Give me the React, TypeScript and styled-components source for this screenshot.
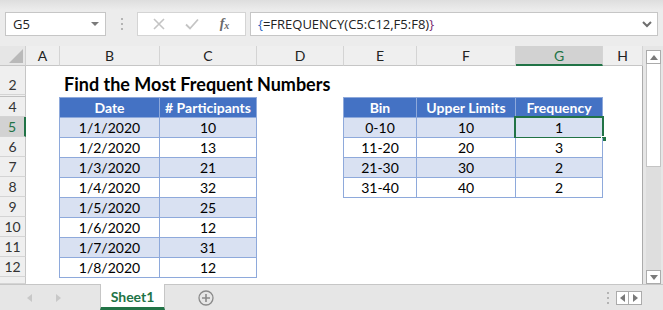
import React from 'react';
import styled, { createGlobalStyle } from 'styled-components';

const GREEN = '#217346';
const TABLE_LINE = '#8ea9db';
const UI_FONT = '"Open Sans", "Liberation Sans", sans-serif';
const CELL_FONT = 'Lato, "Liberation Sans", sans-serif';

const GlobalStyle = createGlobalStyle`
  html, body {
    margin: 0;
    padding: 0;
    background: #e6e6e6;
  }
  * {
    box-sizing: border-box;
  }
`;

const columns = ['A', 'B', 'C', 'D', 'E', 'F', 'G', 'H'];
const rows = [4, 5, 6, 7, 8, 9, 10, 11, 12];

const participants = [
  ['1/1/2020', '10'],
  ['1/2/2020', '13'],
  ['1/3/2020', '21'],
  ['1/4/2020', '32'],
  ['1/5/2020', '25'],
  ['1/6/2020', '12'],
  ['1/7/2020', '31'],
  ['1/8/2020', '12'],
];

const bins = [
  ['0-10', '10', '1'],
  ['11-20', '20', '3'],
  ['21-30', '30', '2'],
  ['31-40', '40', '2'],
];

const App = () => {
  return (
    <Window>
      <GlobalStyle />
      <FormulaBar>
        <NameBox>
          <span>G5</span>
          <DownTriangle />
        </NameBox>
        <Grip>
          <i />
          <i />
          <i />
        </Grip>
        <ButtonBox>
          <BarButton>
            <svg width="12" height="12" viewBox="0 0 12 12">
              <path d="M1 1 L11 11 M11 1 L1 11" stroke="#c4c4c4" strokeWidth="1.6" />
            </svg>
          </BarButton>
          <BarButton>
            <svg width="14" height="12" viewBox="0 0 14 12">
              <path d="M1 6.5 L5 10.5 L13 1.5" stroke="#c4c4c4" strokeWidth="1.8" fill="none" />
            </svg>
          </BarButton>
          <FxLabel>
            f<sub>x</sub>
          </FxLabel>
        </ButtonBox>
        <FormulaInput>
          <span>
            <Brace $color="#1f5fbf">{'{'}</Brace>=FREQUENCY(C5:C12,F5:F8)
            <Brace $color="#7a2a6e">{'}'}</Brace>
          </span>
          <svg width="10" height="7" viewBox="0 0 10 7">
            <path d="M1 1 L5 5 L9 1" stroke="#6e6e6e" strokeWidth="2" fill="none" />
          </svg>
        </FormulaInput>
      </FormulaBar>

      <Workspace>
        <Sheet>
          <Corner>
            <svg width="14" height="14" viewBox="0 0 14 14">
              <path d="M14 0 L14 14 L0 14 Z" fill="#b9b9b9" />
            </svg>
          </Corner>
          {columns.map((c) => (
            <ColHead key={c} $active={c === 'G'}>
              {c}
            </ColHead>
          ))}

          <RowHead $row={2}>2</RowHead>
          <HiddenRow />
          {rows.map((r) => (
            <RowHead key={r} $row={r} $active={r === 5}>
              {r}
            </RowHead>
          ))}
          <RowHead $row={13} />

          <Title>Find the Most Frequent Numbers</Title>

          <DataTable $col="3 / 5" $row="4 / 13" $cols="100px 97px">
            <HeadCell>Date</HeadCell>
            <HeadCell># Participants</HeadCell>
            {participants.map(([d, n], i) => (
              <React.Fragment key={d}>
                <Cell $band={i % 2 === 0}>{d}</Cell>
                <Cell $band={i % 2 === 0}>{n}</Cell>
              </React.Fragment>
            ))}
          </DataTable>

          <DataTable $col="6 / 9" $row="4 / 9" $cols="73px 99px 87px">
            <HeadCell>Bin</HeadCell>
            <HeadCell>Upper Limits</HeadCell>
            <HeadCell>Frequency</HeadCell>
            {bins.map(([b, u, f], i) => (
              <React.Fragment key={b}>
                <Cell $band={i % 2 === 0}>{b}</Cell>
                <Cell $band={i % 2 === 0}>{u}</Cell>
                <Cell $band={i % 2 === 0}>
                  {f}
                  {i === 0 && (
                    <Selection>
                      <FillHandle />
                    </Selection>
                  )}
                </Cell>
              </React.Fragment>
            ))}
          </DataTable>
        </Sheet>

        <VScroll>
          <ScrollButton>
            <svg width="8" height="5" viewBox="0 0 8 5">
              <path d="M0 5 L4 0 L8 5 Z" fill="#7a7a7a" />
            </svg>
          </ScrollButton>
          <Thumb />
          <Track />
          <ScrollButton>
            <svg width="8" height="5" viewBox="0 0 8 5">
              <path d="M0 0 L4 5 L8 0 Z" fill="#7a7a7a" />
            </svg>
          </ScrollButton>
        </VScroll>
      </Workspace>

      <TabBar>
        <TabNav>
          <svg width="5" height="8" viewBox="0 0 5 8">
            <path d="M5 0 L0 4 L5 8 Z" fill="#c8c8c8" />
          </svg>
          <svg width="5" height="8" viewBox="0 0 5 8">
            <path d="M0 0 L5 4 L0 8 Z" fill="#c8c8c8" />
          </svg>
        </TabNav>
        <SheetTab>Sheet1</SheetTab>
        <AddSheet>
          <svg width="16" height="16" viewBox="0 0 16 16">
            <circle cx="8" cy="8" r="7" stroke="#8a8a8a" strokeWidth="1.3" fill="none" />
            <path d="M8 4 V12 M4 8 H12" stroke="#8a8a8a" strokeWidth="1.6" />
          </svg>
        </AddSheet>
        <Spacer />
        <Grip $small>
          <i />
          <i />
          <i />
        </Grip>
        <HScroll>
          <HButton>
            <svg width="5" height="8" viewBox="0 0 5 8">
              <path d="M5 0 L0 4 L5 8 Z" fill="#7a7a7a" />
            </svg>
          </HButton>
          <HButton>
            <svg width="5" height="8" viewBox="0 0 5 8">
              <path d="M0 0 L5 4 L0 8 Z" fill="#7a7a7a" />
            </svg>
          </HButton>
        </HScroll>
      </TabBar>
    </Window>
  );
};

const Window = styled.div`
  width: 663px;
  height: 310px;
  display: flex;
  flex-direction: column;
  overflow: hidden;
  background: #e6e6e6;
`;

const FormulaBar = styled.div`
  height: 46px;
  display: flex;
  align-items: flex-start;
  padding: 12px 5px 0 5px;
  background: linear-gradient(#dedede 0px, #ececec 10px, #ececec 100%);
  font-family: ${UI_FONT};
`;

const NameBox = styled.div`
  width: 101px;
  height: 24px;
  display: flex;
  align-items: center;
  justify-content: space-between;
  padding: 0 6px 0 7px;
  background: #fff;
  border: 1px solid #c6c6c6;
  font-size: 13px;
  color: #222;
`;

const DownTriangle = styled.span`
  width: 0;
  height: 0;
  border-left: 4px solid transparent;
  border-right: 4px solid transparent;
  border-top: 4px solid #7a7a7a;
`;

const Grip = styled.div<{ $small?: boolean }>`
  width: ${(p) => (p.$small ? '16px' : '31px')};
  height: ${(p) => (p.$small ? '26px' : '24px')};
  display: flex;
  flex-direction: column;
  align-items: center;
  justify-content: center;
  gap: 3px;

  i {
    width: 2px;
    height: 2px;
    background: #b4b4b4;
  }
`;

const ButtonBox = styled.div`
  width: 109px;
  height: 24px;
  display: flex;
  align-items: center;
  justify-content: space-around;
  padding: 0 4px;
  background: #fff;
  border: 1px solid #d4d4d4;
`;

const BarButton = styled.div`
  width: 24px;
  display: flex;
  justify-content: center;
`;

const FxLabel = styled.div`
  width: 24px;
  text-align: center;
  font-family: 'Liberation Serif', serif;
  font-style: italic;
  font-weight: bold;
  font-size: 14px;
  color: #6a6a6a;

  sub {
    font-size: 10px;
    vertical-align: -1px;
  }
`;

const FormulaInput = styled.div`
  flex: 1;
  height: 24px;
  margin-left: 4px;
  display: flex;
  align-items: center;
  justify-content: space-between;
  padding: 0 5px 0 7px;
  background: #fff;
  border: 1px solid #c6c6c6;
  font-size: 13px;
  color: #222;
  white-space: nowrap;
`;

const Brace = styled.span<{ $color: string }>`
  color: ${(p) => p.$color};
`;

const Workspace = styled.div`
  height: 238px;
  display: flex;
`;

const Sheet = styled.div`
  width: 643px;
  display: grid;
  grid-template-columns: 26px 34px 100px 97px 87px 73px 99px 87px 40px;
  grid-template-rows: 20px 29px 2px repeat(9, 20px) 7px;
  background: #fff;
  border-right: 1px solid #ababab;
  font-family: ${CELL_FONT};
`;

const Corner = styled.div`
  grid-column: 1;
  grid-row: 1;
  display: flex;
  align-items: flex-end;
  justify-content: flex-end;
  padding: 0 2px 2px 0;
  background: #e6e6e6;
  border-right: 1px solid #d0d0d0;
  border-bottom: 1px solid #c6c6c6;
`;

const ColHead = styled.div<{ $active?: boolean }>`
  grid-row: 1;
  display: flex;
  align-items: center;
  justify-content: center;
  background: ${(p) => (p.$active ? '#d2d2d2' : '#efefef')};
  border-right: 1px solid #d4d4d4;
  border-bottom: ${(p) => (p.$active ? `2px solid ${GREEN}` : '1px solid #c6c6c6')};
  font-size: 14px;
  color: ${(p) => (p.$active ? GREEN : '#222')};

  &:last-of-type {
    border-right: none;
  }
`;

const RowHead = styled.div<{ $row: number; $active?: boolean }>`
  grid-column: 1;
  grid-row: ${(p) => (p.$row === 2 ? 2 : p.$row)};
  display: flex;
  align-items: center;
  justify-content: center;
  padding-top: ${(p) => (p.$row === 2 ? '9px' : '0')};
  background: ${(p) => (p.$active ? '#d2d2d2' : '#efefef')};
  border-bottom: 1px solid #d4d4d4;
  border-right: ${(p) => (p.$active ? `2px solid ${GREEN}` : '1px solid #c6c6c6')};
  font-size: 14px;
  color: ${(p) => (p.$active ? GREEN : '#333')};
`;

const HiddenRow = styled.div`
  grid-column: 1;
  grid-row: 3;
  background: #efefef;
  border-bottom: 1px solid #c0c0c0;
  border-right: 1px solid #c6c6c6;
`;

const Title = styled.div`
  grid-column: 3 / 9;
  grid-row: 2;
  align-self: end;
  padding: 0 0 0 4px;
  font-size: 18px;
  font-weight: bold;
  color: #000;
  white-space: nowrap;
`;

const DataTable = styled.div<{ $col: string; $row: string; $cols: string }>`
  grid-column: ${(p) => p.$col};
  grid-row: ${(p) => p.$row};
  align-self: start;
  justify-self: start;
  display: grid;
  grid-template-columns: ${(p) => p.$cols};
  grid-auto-rows: 20px;
  margin-left: -1px;
  border-left: 1px solid ${TABLE_LINE};
  border-top: 1px solid ${TABLE_LINE};
  font-size: 14px;
`;

const HeadCell = styled.div`
  display: flex;
  align-items: center;
  justify-content: center;
  background: #4472c4;
  border-right: 1px solid ${TABLE_LINE};
  border-bottom: 1px solid ${TABLE_LINE};
  color: #fff;
  font-weight: bold;
`;

const Cell = styled.div<{ $band: boolean }>`
  position: relative;
  display: flex;
  align-items: center;
  justify-content: center;
  background: ${(p) => (p.$band ? '#d9e1f2' : '#fff')};
  border-right: 1px solid ${TABLE_LINE};
  border-bottom: 1px solid ${TABLE_LINE};
  color: #000;
`;

const Selection = styled.div`
  position: absolute;
  top: -2px;
  left: -2px;
  right: -2px;
  bottom: -2px;
  border: 2px solid ${GREEN};
`;

const FillHandle = styled.div`
  position: absolute;
  right: -5px;
  bottom: -5px;
  width: 6px;
  height: 6px;
  background: ${GREEN};
  border: 1px solid #fff;
`;

const VScroll = styled.div`
  width: 20px;
  display: flex;
  flex-direction: column;
  padding: 4px 2px 0 3px;
`;

const ScrollButton = styled.div`
  height: 14px;
  display: flex;
  align-items: center;
  justify-content: center;
  background: #fff;
  border: 1px solid #ababab;
`;

const Thumb = styled.div`
  height: 103px;
  background: #fff;
  border: 1px solid #c4c4c4;
  border-top: none;
`;

const Track = styled.div`
  flex: 1;
  background: #dedede;
`;

const TabBar = styled.div`
  height: 26px;
  display: flex;
  align-items: stretch;
  border-top: 1px solid #c6c6c6;
  font-family: ${CELL_FONT};
`;

const TabNav = styled.div`
  width: 100px;
  display: flex;
  align-items: center;
  gap: 24px;
  padding-left: 27px;
`;

const SheetTab = styled.div`
  width: 65px;
  margin-top: -1px;
  display: flex;
  align-items: center;
  justify-content: center;
  background: #fff;
  border-left: 1px solid #c6c6c6;
  border-right: 1px solid #c6c6c6;
  border-bottom: 3px solid ${GREEN};
  padding-top: 2px;
  font-size: 14px;
  font-weight: bold;
  color: ${GREEN};
`;

const AddSheet = styled.div`
  width: 82px;
  display: flex;
  align-items: center;
  justify-content: center;
`;

const Spacer = styled.div`
  flex: 1;
`;

const HScroll = styled.div`
  display: flex;
  align-items: center;
  margin-right: 21px;
`;

const HButton = styled.div`
  width: 13px;
  height: 14px;
  display: flex;
  align-items: center;
  justify-content: center;
  background: #fff;
  border: 1px solid #ababab;

  & + & {
    border-left: none;
  }
`;

export default App;
